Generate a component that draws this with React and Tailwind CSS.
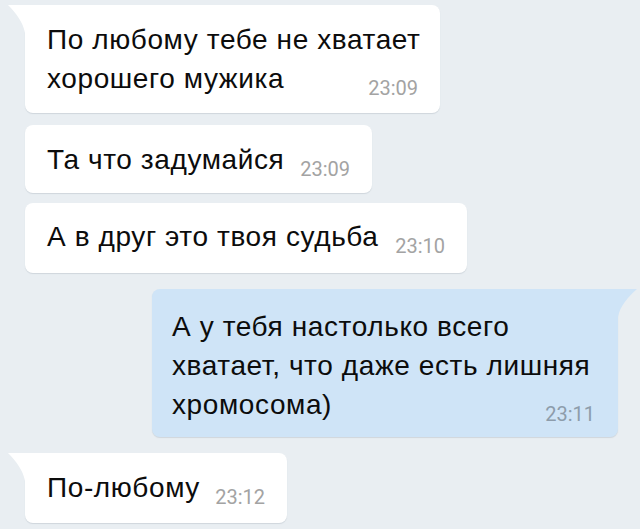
import React from "react";

function TailLeft({ color }) {
  return (
    <svg className="absolute left-[-17px] top-0" width="17" height="28" viewBox="0 0 17 28">
      <path d="M0 0 H17 V28 C15 17 8 8 0 0 Z" fill={color} />
    </svg>
  );
}

function TailRight({ color }) {
  return (
    <svg className="absolute right-[-19px] top-0" width="19" height="28" viewBox="0 0 19 28">
      <path d="M19 0 H0 V28 C2 17 10 8 19 0 Z" fill={color} />
    </svg>
  );
}

function Time({ children, blue }) {
  return (
    <span
      className={
        "text-[20px] leading-[20px] shrink-0 " +
        (blue ? "text-[#8d9cab]" : "text-[#a3a3a3]")
      }
      style={{ fontFamily: "Roboto, sans-serif" }}
    >
      {children}
    </span>
  );
}

function Bubble({ lines, time, width, pt, pb, tail, blue, ml }) {
  const last = lines[lines.length - 1];
  const rest = lines.slice(0, -1);
  return (
    <div
      className={
        "relative rounded-[8px] shadow-[0_1px_1px_rgba(60,80,100,0.15)] " +
        (blue ? "bg-[#cfe4f7] pl-[20px] pr-[23px] " : "bg-white pl-[22px] pr-[22px] ") +
        (tail && !blue ? "rounded-tl-none " : "") +
        (tail && blue ? "rounded-tr-none " : "")
      }
      style={{ width, paddingTop: pt, paddingBottom: pb, marginLeft: ml }}
    >
      {tail && !blue && <TailLeft color="#ffffff" />}
      {tail && blue && <TailRight color="#cfe4f7" />}
      {rest.map((l, i) => (
        <div key={i} className="text-[28px] leading-[39px] tracking-[0.6px] text-[#0c0c0c] whitespace-nowrap">
          {l}
        </div>
      ))}
      <div className="flex items-end justify-between">
        <span className="text-[28px] leading-[39px] tracking-[0.6px] text-[#0c0c0c] whitespace-nowrap">{last}</span>
        <Time blue={blue}>{time}</Time>
      </div>
    </div>
  );
}

export default function App() {
  return (
    <div
      className="w-[640px] h-[529px] bg-[#e9eef2] overflow-hidden flex flex-col items-start pt-[5px]"
      style={{ fontFamily: "'Liberation Sans', Arial, sans-serif" }}
    >
      <Bubble
        lines={["По любому тебе не хватает", "хорошего мужика"]}
        time="23:09"
        width={415}
        pt={15}
        pb={15}
        ml={25}
        tail
      />
      <div className="h-[12px]" />
      <Bubble lines={["Та что задумайся"]} time="23:09" width={347} pt={15} pb={14} ml={25} />
      <div className="h-[10px]" />
      <Bubble lines={["А в друг это твоя судьба"]} time="23:10" width={442} pt={14} pb={17} ml={25} />
      <div className="h-[16px]" />
      <Bubble
        lines={["А у тебя настолько всего", "хватает, что даже есть лишняя", "хромосома)"]}
        time="23:11"
        width={466}
        pt={18}
        pb={13}
        ml={152}
        tail
        blue
      />
      <div className="h-[16px]" />
      <Bubble lines={["По-любому"]} time="23:12" width={262} pt={15} pb={16} ml={25} tail />
    </div>
  );
}
